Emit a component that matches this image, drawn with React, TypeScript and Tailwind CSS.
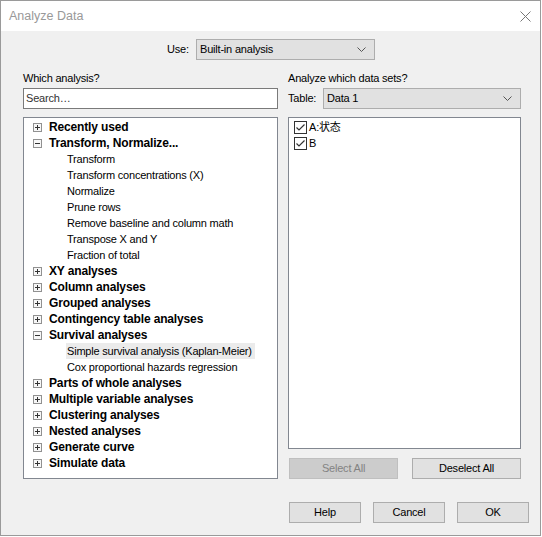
import React from "react";

type Node = { label: string; open?: boolean; children?: string[] };

const tree: Node[] = [
  { label: "Recently used" },
  {
    label: "Transform, Normalize...",
    open: true,
    children: [
      "Transform",
      "Transform concentrations (X)",
      "Normalize",
      "Prune rows",
      "Remove baseline and column math",
      "Transpose X and Y",
      "Fraction of total",
    ],
  },
  { label: "XY analyses" },
  { label: "Column analyses" },
  { label: "Grouped analyses" },
  { label: "Contingency table analyses" },
  {
    label: "Survival analyses",
    open: true,
    children: ["Simple survival analysis (Kaplan-Meier)", "Cox proportional hazards regression"],
  },
  { label: "Parts of whole analyses" },
  { label: "Multiple variable analyses" },
  { label: "Clustering analyses" },
  { label: "Nested analyses" },
  { label: "Generate curve" },
  { label: "Simulate data" },
];

const selected = "Simple survival analysis (Kaplan-Meier)";

function Expander({ open }: { open?: boolean }) {
  return (
    <svg width="9" height="9" viewBox="0 0 9 9" className="shrink-0">
      <rect x="0.5" y="0.5" width="8" height="8" fill="#f7f7f7" stroke="#919191" />
      <line x1="2" y1="4.5" x2="7" y2="4.5" stroke="#333" />
      {!open && <line x1="4.5" y1="2" x2="4.5" y2="7" stroke="#333" />}
    </svg>
  );
}

function Chevron() {
  return (
    <svg width="9" height="5" viewBox="0 0 9 5" className="shrink-0">
      <path d="M0.5 0.5 L4.5 4.5 L8.5 0.5" fill="none" stroke="#555" strokeWidth="1" />
    </svg>
  );
}

function Check() {
  return (
    <svg width="13" height="13" viewBox="0 0 13 13" className="shrink-0">
      <rect x="0.5" y="0.5" width="12" height="12" fill="#fff" stroke="#333" />
      <path d="M2.5 6.5 L5 9 L10.5 3.5" fill="none" stroke="#333" strokeWidth="1.2" />
    </svg>
  );
}

function Btn({ children, disabled, w }: { children: React.ReactNode; disabled?: boolean; w: string }) {
  return (
    <div
      className={`${w} h-[21px] flex items-center justify-center border ${
        disabled ? "bg-[#cccccc] border-[#bfbfbf] text-[#838383]" : "bg-[#e1e1e1] border-[#adadad] text-black"
      }`}
    >
      {children}
    </div>
  );
}

export default function App() {
  return (
    <div
      className="w-[541px] h-[536px] border border-[#9a9a9a] bg-[#f0f0f0] flex flex-col text-[11px] tracking-[-0.2px] text-black"
      style={{ fontFamily: '"Liberation Sans", "Noto Sans CJK SC", sans-serif' }}
    >
      {/* title bar */}
      <div className="h-[30px] bg-white flex items-center justify-between pl-[8px] pr-[9px] shrink-0">
        <span className="text-[12.5px] tracking-normal text-[#999999]">Analyze Data</span>
        <svg width="11" height="11" viewBox="0 0 11 11">
          <path d="M0.5 0.5 L10.5 10.5 M10.5 0.5 L0.5 10.5" stroke="#777" strokeWidth="1" />
        </svg>
      </div>

      {/* use row */}
      <div className="flex items-center mt-[8px] pl-[166px] h-[21px]">
        <span className="w-[29px]">Use:</span>
        <div className="w-[179px] h-[21px] bg-[#e1e1e1] border border-[#adadad] flex items-center justify-between pl-[3px] pr-[8px]">
          <span>Built-in analysis</span>
          <Chevron />
        </div>
      </div>

      {/* columns */}
      <div className="flex pl-[22px] mt-[8px] gap-[10px]">
        <div className="w-[255px] flex flex-col">
          <div className="h-[20px] flex items-center">Which analysis?</div>
          <div className="h-[21px] bg-white border border-[#7a7a7a] flex items-center pl-[2px] text-[#333]">Search…</div>
          <div className="mt-[8px] h-[362px] bg-white border border-[#828790] pt-[1px]">
            {tree.map((n) => (
              <div key={n.label}>
                <div className="h-[16px] flex items-center pl-[9px]">
                  <Expander open={n.open} />
                  <span className="ml-[7px] font-bold text-[12px] tracking-[-0.15px]">{n.label}</span>
                </div>
                {n.open &&
                  n.children?.map((c) => (
                    <div key={c} className="h-[16px] flex items-stretch pl-[42px]">
                      <span
                        className={`flex items-center px-[1px] pr-[3px] whitespace-nowrap ${
                          c === selected ? "bg-[#ebebeb]" : ""
                        }`}
                      >
                        {c}
                      </span>
                    </div>
                  ))}
              </div>
            ))}
          </div>
        </div>

        <div className="w-[233px] flex flex-col">
          <div className="h-[20px] flex items-center">Analyze which data sets?</div>
          <div className="h-[21px] flex items-center">
            <span className="w-[35px]">Table:</span>
            <div className="flex-1 h-[21px] bg-[#e1e1e1] border border-[#adadad] flex items-center justify-between pl-[3px] pr-[8px]">
              <span>Data 1</span>
              <Chevron />
            </div>
          </div>
          <div className="mt-[8px] h-[332px] bg-white border border-[#828790] pt-[1px] pl-[5px]">
            <div className="h-[16px] flex items-center gap-[2px]">
              <Check />
              <span>A:状态</span>
            </div>
            <div className="h-[16px] flex items-center gap-[2px]">
              <Check />
              <span>B</span>
            </div>
          </div>
          <div className="mt-[9px] flex justify-between pl-[1px]">
            <Btn w="w-[109px]" disabled>
              Select All
            </Btn>
            <Btn w="w-[109px]">Deselect All</Btn>
          </div>
        </div>
      </div>

      {/* bottom buttons */}
      <div className="mt-[23px] flex justify-end gap-[12px] pr-[11px]">
        <Btn w="w-[72px]">Help</Btn>
        <Btn w="w-[72px]">Cancel</Btn>
        <Btn w="w-[72px]">OK</Btn>
      </div>
    </div>
  );
}
